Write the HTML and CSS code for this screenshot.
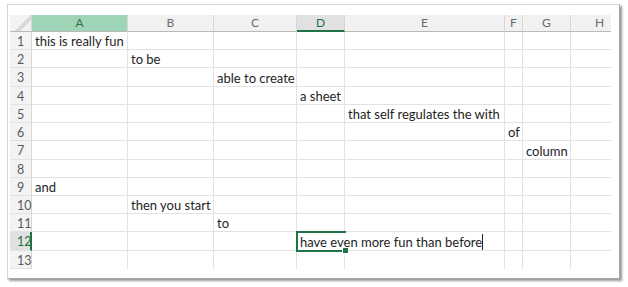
FILE: index.html
```html
<html>
<head>
    <link rel="stylesheet" href="styles.css">
</head>
<body onload="init()">
<div class="frame">
    <div class="sheet" id="sheet">
        <div class="selection"><div class="handle"></div></div>
    </div>
</div>

<script>
    var letters = ['A', 'B', 'C', 'D', 'E', 'F', 'G', 'H']
    var values = {
        1: [0, 'this is really fun'],
        2: [1, 'to be'],
        3: [2, 'able to create'],
        4: [3, 'a sheet'],
        5: [4, 'that self regulates the with'],
        6: [5, 'of'],
        7: [6, 'column'],
        9: [0, 'and'],
        10: [1, 'then you start'],
        11: [2, 'to'],
        12: [3, 'have even more fun than before']
    }

    function cell(cls, text) {
        var node = document.createElement("div")
        node.className = cls
        if (text) {
            node.appendChild(document.createTextNode(text))
        }
        return node
    }

    function init() {
        var sheet = document.getElementById("sheet")

        sheet.appendChild(cell('corner'))
        for (var c = 0; c < letters.length; c++) {
            var cls = 'colhead'
            if (c === 0) cls += ' picked'
            if (c === 3) cls += ' active'
            sheet.appendChild(cell(cls, letters[c]))
        }

        for (var r = 1; r <= 13; r++) {
            var rcls = 'rowhead'
            if (r === 12) rcls += ' active'
            sheet.appendChild(cell(rcls, '' + r))

            for (var c = 0; c < letters.length; c++) {
                // the text in D12 runs over E12, so that cell is merged in
                if (r === 12 && c === 4) continue

                var ccls = 'cell'
                if (r === 13) ccls += ' last'
                var node = cell(ccls)
                if (values[r] && values[r][0] === c) {
                    var span = document.createElement("span")
                    span.className = 'text'
                    span.appendChild(document.createTextNode(values[r][1]))
                    node.appendChild(span)
                    if (r === 12) {
                        node.className += ' editing'
                        span.className += ' caret'
                    }
                }
                sheet.appendChild(node)
            }
        }
    }
</script>
</body>
</html>
```

FILE: styles.css
```css
html, body {
    margin: 0;
    background: white;
    font-family: "Lato", "Open Sans", sans-serif;
}

.frame {
    margin: 4px 0 0 7px;
    width: 601px;
    height: 253px;
    padding: 10px 8px 10px 2px;
    border: 1px solid #d4d4d4;
    border-right-color: #a8a8a8;
    border-bottom-color: #a8a8a8;
    box-shadow: 2px 2px 2px #9a9a9a;
    background: white;
}

.sheet {
    position: relative;
    width: 601px;
    overflow: hidden;
    display: grid;
    grid-template-columns: 22px 96px 86px 83px 48px 160px 18px 48px 58px;
    grid-template-rows: 17px repeat(13, 18.23px);
}

.corner {
    background: linear-gradient(135deg, #f3f3f3 55%, #d9d9d9 56%, #d9d9d9 70%, #f3f3f3 71%);
    border-right: 1px solid #d6d6d6;
    border-bottom: 1px solid #b9b9b9;
}

.colhead {
    background: #f1f1f1;
    color: #6a6a6a;
    font-size: 12px;
    text-align: center;
    line-height: 16px;
    border-right: 1px solid #d6d6d6;
    border-bottom: 1px solid #b9b9b9;
}

.colhead.picked {
    background: #9fd5b7;
    color: #3d6b52;
}

.colhead.active {
    background: #e1e1e1;
    color: #217346;
    border-bottom: 2px solid #217346;
}

.rowhead {
    background: #f3f3f3;
    color: #5a5a5a;
    font-size: 12.5px;
    padding-left: 7px;
    line-height: 19px;
    border-right: 1px solid #d6d6d6;
    border-bottom: 1px solid #e2e2e2;
}

.rowhead.active {
    background: #e1e1e1;
    color: #217346;
    border-right: 2px solid #217346;
}

.cell {
    display: flex;
    align-items: flex-end;
    white-space: nowrap;
    border-right: 1px solid #e2e2e2;
    border-bottom: 1px solid #e2e2e2;
    color: #1e1e1e;
    font-size: 13px;
    padding-left: 3px;
}

.last {
    border-bottom: none;
}

.cell.editing {
    grid-column: span 2;
}

.text {
    line-height: 16px;
}

.caret {
    border-right: 1px solid #222;
}

.selection {
    position: absolute;
    left: 286px;
    top: 216px;
    width: 48px;
    height: 17px;
    border: 2px solid #217346;
    border-right: none;
}

.handle {
    position: absolute;
    right: -3px;
    bottom: -4px;
    width: 5px;
    height: 5px;
    background: #217346;
    border: 1px solid white;
}
```
